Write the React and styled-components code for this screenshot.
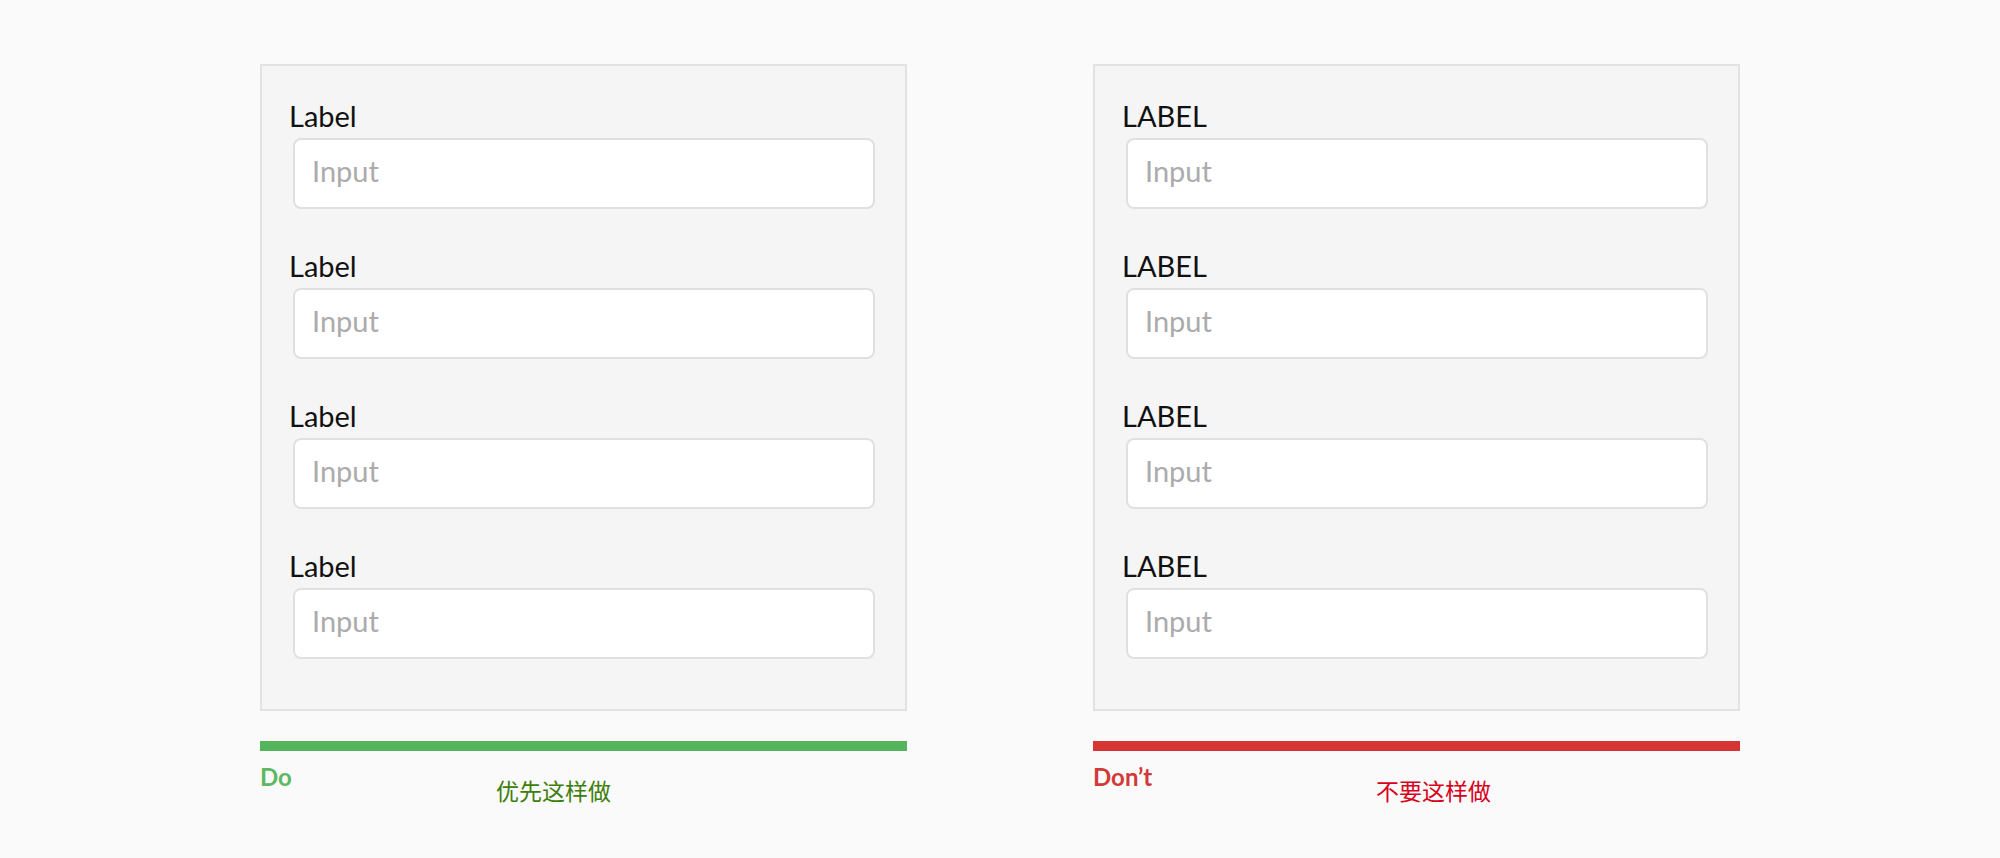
import React from "react";
import styled, { createGlobalStyle } from "styled-components";

const Global = createGlobalStyle`
  html, body { margin: 0; padding: 0; background: #fafafa; }
  body { font-family: Lato, "Noto Sans", sans-serif; }
`;

const Page = styled.div`
  min-height: 858px;
  box-sizing: border-box;
  padding-top: 64px;
  display: flex;
  justify-content: center;
  gap: 186px;
  background: #fafafa;
`;

const Column = styled.div`
  width: 647px;
  display: flex;
  flex-direction: column;
`;

const Panel = styled.div`
  box-sizing: border-box;
  width: 647px;
  height: 647px;
  border: 2px solid #e2e2e2;
  background: #f5f5f5;
  padding: 32px 30px 48px 27px;
  display: flex;
  flex-direction: column;
  gap: 39px;
`;

const Field = styled.div`
  display: flex;
  flex-direction: column;
  gap: 4px;
`;

const Label = styled.div`
  font-family: Lato, sans-serif;
  font-size: 29px;
  line-height: 36px;
  color: #111;
`;

const InputBox = styled.div`
  box-sizing: border-box;
  margin-left: 4px;
  height: 71px;
  border: 2px solid #e0e0e0;
  border-radius: 8px;
  background: #fff;
  padding: 0 0 6px 17px;
  display: flex;
  align-items: center;
  font-family: Lato, sans-serif;
  font-size: 29px;
  color: #ababab;
`;

const Bar = styled.div`
  height: 10px;
  margin-top: 30px;
  background: ${(p) => p.$color};
`;

const Caption = styled.div`
  display: grid;
  grid-template-columns: ${(p) => p.$offset}px auto;
  align-items: start;
  margin-top: 11px;
`;

const Title = styled.div`
  font-family: Lato, sans-serif;
  font-weight: 700;
  font-size: 24px;
  line-height: 30px;
  color: ${(p) => p.$color};
  white-space: nowrap;
`;

const Note = styled.div`
  font-family: "Noto Sans CJK SC", sans-serif;
  font-size: 23px;
  line-height: 30px;
  margin-top: 13px;
  color: ${(p) => p.$color};
`;

const examples = [
  {
    label: "Label",
    title: "Do",
    note: "优先这样做",
    bar: "#54b55c",
    titleColor: "#5cb862",
    noteColor: "#3d7e0c",
    offset: 236,
  },
  {
    label: "LABEL",
    title: "Don’t",
    note: "不要这样做",
    bar: "#d63535",
    titleColor: "#d23a3a",
    noteColor: "#d8001b",
    offset: 283,
  },
];

export default function App() {
  return (
    <>
      <Global />
      <Page>
        {examples.map((ex) => (
          <Column key={ex.title}>
            <Panel>
              {[0, 1, 2, 3].map((i) => (
                <Field key={i}>
                  <Label>{ex.label}</Label>
                  <InputBox>Input</InputBox>
                </Field>
              ))}
            </Panel>
            <Bar $color={ex.bar} />
            <Caption $offset={ex.offset}>
              <Title $color={ex.titleColor}>{ex.title}</Title>
              <Note $color={ex.noteColor}>{ex.note}</Note>
            </Caption>
          </Column>
        ))}
      </Page>
    </>
  );
}
